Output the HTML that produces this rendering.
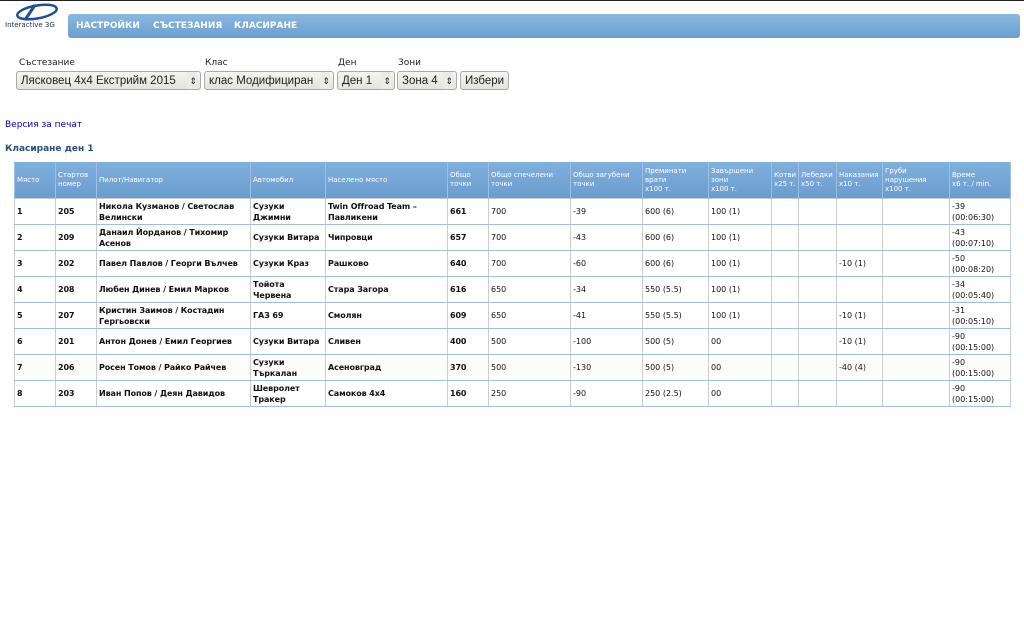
<!DOCTYPE html>
<html><head><meta charset="utf-8"><style>
body{margin:0;width:1024px;height:640px;background:#fff;font-family:"DejaVu Sans","Liberation Sans",sans-serif;position:relative;overflow:hidden;border-top:1px solid #222;box-sizing:border-box}
.logo{position:absolute;left:5px;top:2px;width:60px;height:30px}
.logo span{position:absolute;left:0;top:18px;font-size:7px;color:#234;white-space:nowrap}
.nav{position:absolute;left:68px;top:13px;width:952px;height:24px;border-radius:3px;background:linear-gradient(#8ab8e0,#6a9fd0);}
.nav a{position:absolute;top:7px;font-size:9px;font-weight:bold;color:#fff;text-decoration:none}
.lbl{position:absolute;top:57px;font-size:9px;color:#222}
.sel{position:absolute;top:70px;height:19px;border:1px solid #aaa;border-radius:3px;background:linear-gradient(#f6f5f3,#e4e2de);font-family:"Liberation Sans",sans-serif;font-size:11.5px;color:#222;line-height:19px;padding-left:4px;box-sizing:border-box;white-space:nowrap;overflow:hidden}
.sel i{position:absolute;right:3px;top:0;font-style:normal;font-size:9px;background:#ecebe8;padding-left:2px}
a.pr{position:absolute;left:5px;top:119px;font-size:9px;color:#00c}
h3{position:absolute;left:5px;top:143px;margin:0;font-size:9px;color:#2a4d7a}
table{position:absolute;left:14px;top:161px;width:996px;border-collapse:collapse;table-layout:fixed;font-size:8px}
th{background:linear-gradient(#80b0dc,#6a9ccf);color:#fff;font-weight:normal;text-align:left;height:36px;padding:0 2px;font-size:7px;border-left:1px solid #9cc0e2;line-height:9px}
td{height:25px;padding:0 2px;border:1px solid #ccc;border-bottom:1px solid #9cc0e2;color:#111;line-height:11px}
td.b{font-weight:bold;letter-spacing:-0.1px}
table{border-right:1px solid #9cc0e2;border-left:1px solid #9cc0e2}
</style></head><body>
<div class="logo"><svg width="60" height="20" viewBox="0 0 60 20"><ellipse cx="32" cy="9" rx="20" ry="6.5" fill="none" stroke="#1e4f98" stroke-width="2.5" transform="rotate(-10 32 9)"/><path d="M20 17 L30 2" stroke="#1e4f98" stroke-width="3"/></svg><span>Interactive 3G</span></div>
<div class="nav"><a style="left:8px">НАСТРОЙКИ</a><a style="left:85px">СЪСТЕЗАНИЯ</a><a style="left:166px">КЛАСИРАНЕ</a></div>
<div class="lbl" style="left:19px">Състезание</div><div class="lbl" style="left:205px">Клас</div><div class="lbl" style="left:338px">Ден</div><div class="lbl" style="left:398px">Зони</div>
<div class="sel" style="left:16px;width:185px">Лясковец 4x4 Екстрийм 2015<i>⇕</i></div>
<div class="sel" style="left:204px;width:130px">клас Модифициран<i>⇕</i></div>
<div class="sel" style="left:337px;width:58px">Ден 1<i>⇕</i></div>
<div class="sel" style="left:397px;width:60px">Зона 4<i>⇕</i></div>
<div class="sel" style="left:460px;width:49px">Избери</div>
<a class="pr">Версия за печат</a>
<h3>Класиране ден 1</h3>
<table>
<colgroup><col style="width:41px"><col style="width:41px"><col style="width:154px"><col style="width:75px"><col style="width:122px"><col style="width:41px"><col style="width:82px"><col style="width:72px"><col style="width:66px"><col style="width:63px"><col style="width:27px"><col style="width:38px"><col style="width:46px"><col style="width:67px"><col style="width:61px"></colgroup>
<tr><th>Място</th><th>Стартов номер</th><th>Пилот/Навигатор</th><th>Автомобил</th><th>Населено място</th><th>Общо точки</th><th>Общо спечелени точки</th><th>Общо загубени точки</th><th>Преминати врати<br>x100 т.</th><th>Завършени зони<br>x100 т.</th><th>Котви x25 т.</th><th>Лебедки x50 т.</th><th>Наказания x10 т.</th><th>Груби<br>нарушения<br>x100 т.</th><th>Време<br>x6 т. / min.</th></tr>
<tr><td class="b">1</td><td class="b">205</td><td class="b">Никола Кузманов / Светослав Велински</td><td class="b">Сузуки Джимни</td><td class="b">Twin Offroad Team – Павликени</td><td class="b">661</td><td>700</td><td>-39</td><td>600 (6)</td><td>100 (1)</td><td></td><td></td><td></td><td></td><td>-39<br>(00:06:30)</td></tr>
<tr><td class="b">2</td><td class="b">209</td><td class="b">Данаил Йорданов / Тихомир Асенов</td><td class="b">Сузуки Витара</td><td class="b">Чипровци</td><td class="b">657</td><td>700</td><td>-43</td><td>600 (6)</td><td>100 (1)</td><td></td><td></td><td></td><td></td><td>-43<br>(00:07:10)</td></tr>
<tr><td class="b">3</td><td class="b">202</td><td class="b">Павел Павлов / Георги Вълчев</td><td class="b">Сузуки Краз</td><td class="b">Рашково</td><td class="b">640</td><td>700</td><td>-60</td><td>600 (6)</td><td>100 (1)</td><td></td><td></td><td>-10 (1)</td><td></td><td>-50<br>(00:08:20)</td></tr>
<tr><td class="b">4</td><td class="b">208</td><td class="b">Любен Динев / Емил Марков</td><td class="b">Тойота Червена</td><td class="b">Стара Загора</td><td class="b">616</td><td>650</td><td>-34</td><td>550 (5.5)</td><td>100 (1)</td><td></td><td></td><td></td><td></td><td>-34<br>(00:05:40)</td></tr>
<tr><td class="b">5</td><td class="b">207</td><td class="b">Кристин Заимов / Костадин Гергьовски</td><td class="b">ГАЗ 69</td><td class="b">Смолян</td><td class="b">609</td><td>650</td><td>-41</td><td>550 (5.5)</td><td>100 (1)</td><td></td><td></td><td>-10 (1)</td><td></td><td>-31<br>(00:05:10)</td></tr>
<tr><td class="b">6</td><td class="b">201</td><td class="b">Антон Донев / Емил Георгиев</td><td class="b">Сузуки Витара</td><td class="b">Сливен</td><td class="b">400</td><td>500</td><td>-100</td><td>500 (5)</td><td>00</td><td></td><td></td><td>-10 (1)</td><td></td><td>-90<br>(00:15:00)</td></tr>
<tr><td class="b">7</td><td class="b">206</td><td class="b">Росен Томов / Райко Райчев</td><td class="b">Сузуки Търкалан</td><td class="b">Асеновград</td><td class="b">370</td><td>500</td><td>-130</td><td>500 (5)</td><td>00</td><td></td><td></td><td>-40 (4)</td><td></td><td>-90<br>(00:15:00)</td></tr>
<tr><td class="b">8</td><td class="b">203</td><td class="b">Иван Попов / Деян Давидов</td><td class="b">Шевролет Тракер</td><td class="b">Самоков 4x4</td><td class="b">160</td><td>250</td><td>-90</td><td>250 (2.5)</td><td>00</td><td></td><td></td><td></td><td></td><td>-90<br>(00:15:00)</td></tr>
</table>
</body></html>
